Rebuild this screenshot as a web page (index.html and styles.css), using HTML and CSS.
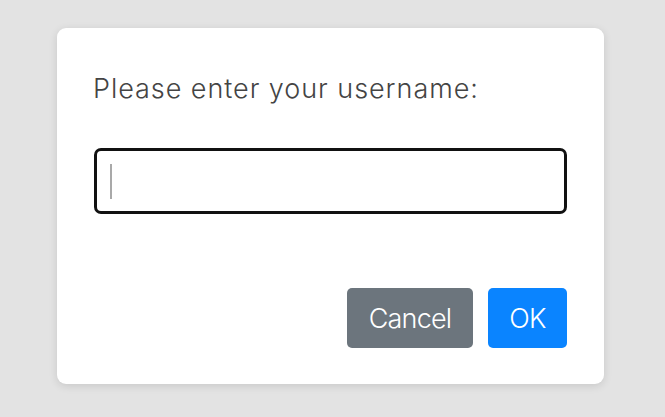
FILE: index.html
```html
<!DOCTYPE html>
<html lang="en">
<head>
<meta charset="utf-8">
<title>Prompt</title>
<link rel="stylesheet" href="styles.css">
</head>
<body>
  <div class="dialog">
    <label class="label" for="username">Please enter your username:</label>
    <div class="field">
      <input id="username" class="input" type="text">
      <span class="caret"></span>
    </div>
    <div class="actions">
      <button class="btn btn-cancel" type="button">Cancel</button>
      <button class="btn btn-ok" type="button">OK</button>
    </div>
  </div>
</body>
</html>
```

FILE: styles.css
```css
html, body {
  margin: 0;
  padding: 0;
}
body {
  width: 665px;
  height: 417px;
  background: #e3e3e3;
  font-family: Inter, "Noto Sans", "Liberation Sans", sans-serif;
  padding-top: 28px;
  padding-left: 57px;
  box-sizing: border-box;
}
.dialog {
  width: 547px;
  height: 356px;
  box-sizing: border-box;
  background: #ffffff;
  border-radius: 9px;
  box-shadow: 0 2px 8px rgba(0, 0, 0, 0.12);
  padding: 44px 37px 36px 37px;
  display: flex;
  flex-direction: column;
}
.label {
  display: block;
  font-size: 27px;
  font-weight: 300;
  letter-spacing: 0.95px;
  color: #444444;
  line-height: 33px;
  margin-left: -1px;
}
.field {
  position: relative;
  margin-top: 43px;
}
.input {
  display: block;
  width: 100%;
  height: 66px;
  box-sizing: border-box;
  border: 3px solid #111111;
  border-radius: 7px;
  padding: 0 14px;
  font-family: inherit;
  font-size: 27px;
  outline: none;
  background: #fff;
}
.caret {
  position: absolute;
  left: 16px;
  top: 16px;
  width: 2px;
  height: 35px;
  background: #a9a9a9;
}
.actions {
  margin-top: auto;
  display: flex;
  justify-content: flex-end;
  gap: 15px;
}
.btn {
  height: 60px;
  border: none;
  border-radius: 5px;
  font-family: inherit;
  font-size: 27px;
  font-weight: 300;
  letter-spacing: -0.8px;
  color: #ffffff;
  padding: 0;
  cursor: pointer;
}
.btn-cancel {
  background: #6c757d;
  width: 126px;
}
.btn-ok {
  background: #0a84ff;
  width: 79px;
}
```
